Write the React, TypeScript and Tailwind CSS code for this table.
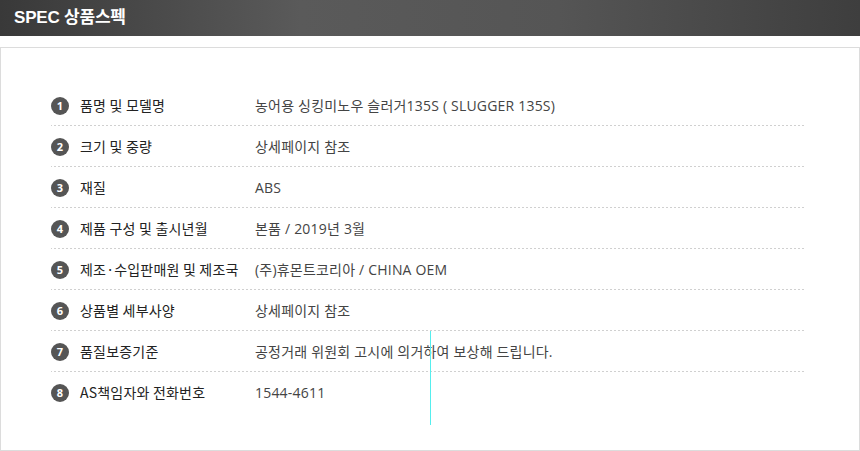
import React from "react";

const rows: [string, string][] = [
  ["품명 및 모델명", "농어용 싱킹미노우 슬러거135S ( SLUGGER 135S)"],
  ["크기 및 중량", "상세페이지 참조"],
  ["재질", "ABS"],
  ["제품 구성 및 출시년월", "본품 / 2019년 3월"],
  ["제조·수입판매원 및 제조국", "(주)휴몬트코리아 / CHINA OEM"],
  ["상품별 세부사양", "상세페이지 참조"],
  ["품질보증기준", "공정거래 위원회 고시에 의거하여 보상해 드립니다."],
  ["AS책임자와 전화번호", "1544-4611"],
];

export default function App() {
  return (
    <div
      className="relative w-[860px] h-[451px] bg-white overflow-hidden"
      style={{ fontFamily: '"Open Sans", "Noto Sans CJK KR", sans-serif' }}
    >
      <div className="h-[36px] flex items-center pl-[14px] bg-[linear-gradient(to_right,#393939_0%,#5a5a5a_35%,#555555_65%,#3e3e3e_100%)]">
        <span
          className="text-white font-bold text-[17px] tracking-[-0.2px]"
          style={{ fontFamily: '"Liberation Sans", "Noto Sans CJK KR", sans-serif' }}
        >
          SPEC 상품스펙
        </span>
      </div>
      <div className="mt-[11px] h-[404px] border border-[#dcdcdc] pt-[37px] pl-[50px] pr-[54px]">
        {rows.map(([label, value], i) => (
          <div
            key={i}
            className={
              "h-[41px] flex items-center " +
              (i < rows.length - 1
                ? "bg-[linear-gradient(to_right,#d0d0d0_50%,transparent_50%)] bg-[length:4px_1px] bg-repeat-x bg-bottom"
                : "")
            }
          >
            <div className="w-[18px] h-[18px] rounded-full bg-[#555555] text-white text-[11px] font-bold flex items-center justify-center leading-none">
              {i + 1}
            </div>
            <div
              className="ml-[11px] w-[175px] text-[14px] text-[#222222] tracking-[0.2px]"
              style={{ fontFamily: '"Noto Sans CJK KR", sans-serif' }}
            >
              {label}
            </div>
            <div className="text-[14px] text-[#444444] tracking-[0.2px]">{value}</div>
          </div>
        ))}
      </div>
      <div className="absolute left-[430px] top-[331px] w-[1px] h-[94px] bg-[#55eeee]" />
    </div>
  );
}
